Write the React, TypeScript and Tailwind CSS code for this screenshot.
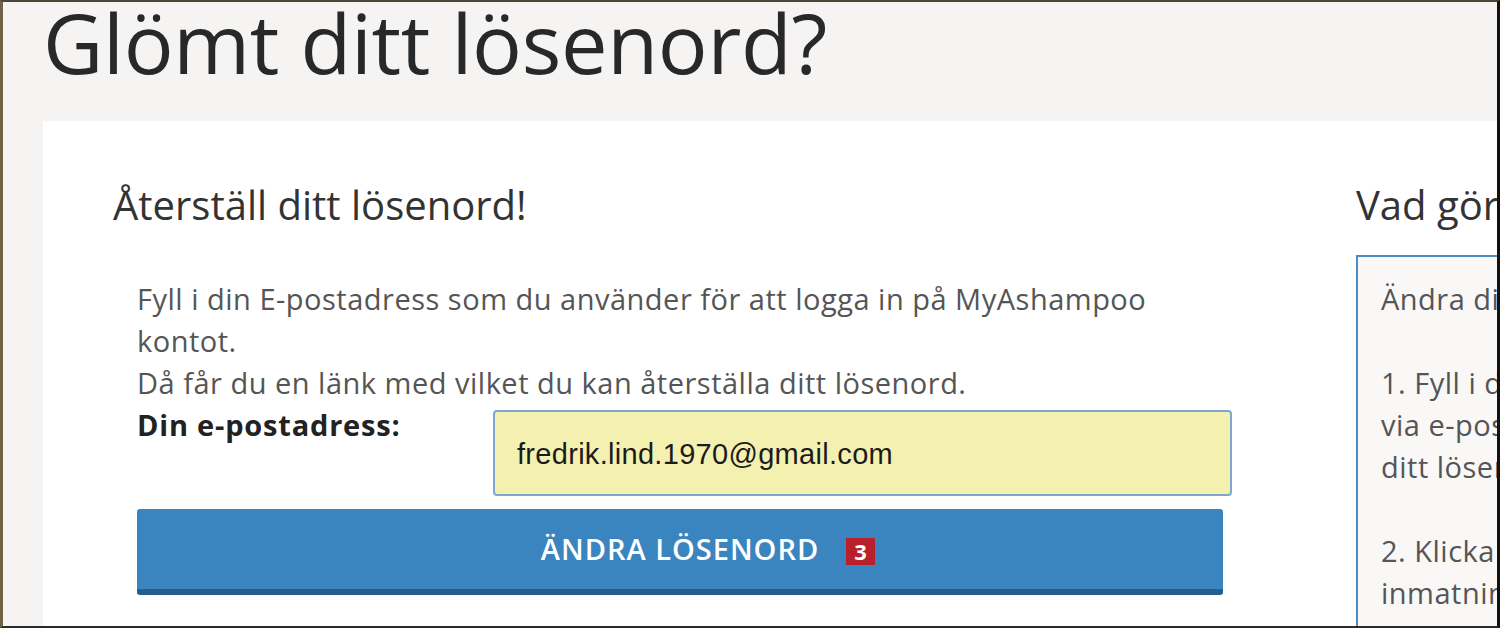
import React from 'react'

const font = { fontFamily: '"Open Sans", "Noto Sans", sans-serif' }

const App: React.FC = () => {
    return (
        <div className="w-[1500px] h-[628px] overflow-hidden bg-[#f5f4f2] border-l-[3px] border-l-[#6e6246] border-t-2 border-t-[#4a4536] border-b-2 border-b-[#2a2a2a] border-r-[3px] border-r-[#111]" style={font}>
            <h1 className="pl-[40px] h-[119px] text-[83px] leading-[80px] text-[#26282a] tracking-[-0.3px] whitespace-nowrap">Glömt ditt lösenord?</h1>
            <div className="ml-[40px] bg-white h-[520px] flex">
                <div className="w-[1313px] pl-[70px] pt-[59px] shrink-0">
                    <h2 className="text-[40px] leading-[50px] text-[#333]">Återställ ditt lösenord!</h2>
                    <div className="pl-[24px] pt-[48px] text-[29px] tracking-[0.5px] leading-[42px] text-[#555]">
                        <p className="w-[1090px]">Fyll i din E-postadress som du använder för att logga in på MyAshampoo kontot.</p>
                        <p>Då får du en länk med vilket du kan återställa ditt lösenord.</p>
                        <div className="flex">
                            <label className="w-[356px] font-bold text-[#222] text-[29px] tracking-[0.8px] leading-[42px]">Din e-postadress:</label>
                            <div className="mt-[6px] w-[739px] h-[86px] rounded-[4px] border-2 border-[#7fa6cf] bg-[#f4f1b0] flex items-center pl-[22px] pt-[2px] text-[29px] tracking-[0.3px] text-[#1b1b1b]" style={{ fontFamily: '"Liberation Sans", Arial, sans-serif' }}>
                                fredrik.lind.1970@gmail.com
                            </div>
                        </div>
                        <button className="relative mt-[13px] w-[1086px] h-[86px] rounded-[3px] bg-[#3a85bf] border-b-[6px] border-[#255d8c] flex items-center justify-center text-white text-[29px] font-semibold tracking-[1px]">
                            ÄNDRA LÖSENORD
                            <span className="absolute left-[709px] top-[29px] w-[29px] h-[27px] bg-[#b8212b] text-white text-[22px] font-bold tracking-normal leading-[27px] flex items-center justify-center">3</span>
                        </button>
                    </div>
                </div>
                <div className="pt-[59px] shrink-0 w-[300px]">
                    <h2 className="text-[40px] leading-[50px] text-[#333] whitespace-nowrap">Vad gör jag?</h2>
                    <div className="mt-[25px] border-l-2 border-t-2 border-[#4b8cc3] bg-[#f9f8f7] pl-[23px] pt-[21px] h-[400px] text-[29px] tracking-[0.5px] leading-[42px] text-[#555] whitespace-nowrap">
                        <p>Ändra ditt lösenord</p>
                        <p>&nbsp;</p>
                        <p>1. Fyll i din e-postadress</p>
                        <p>via e-post får du en länk</p>
                        <p>ditt lösenord</p>
                        <p>&nbsp;</p>
                        <p>2. Klicka på länken</p>
                        <p>inmatning</p>
                    </div>
                </div>
            </div>
        </div>
    )
}

export default App
